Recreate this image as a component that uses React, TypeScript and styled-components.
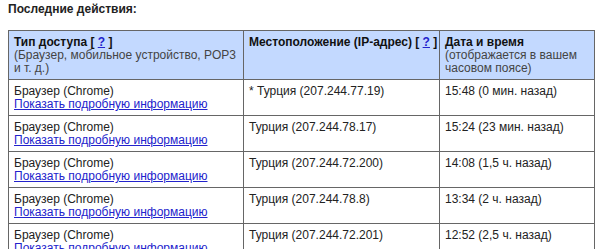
import styled, { createGlobalStyle } from "styled-components";

const GlobalStyle = createGlobalStyle`
  body {
    margin: 0;
    background: #fff;
    font-family: "Liberation Sans", Arial, sans-serif;
    font-size: 12px;
    color: #222;
  }
`;

const Page = styled.div`
  padding: 2px 6px 0 8px;
`;

const Title = styled.div`
  font-weight: bold;
  font-size: 12px;
  line-height: 14px;
  color: #222;
  margin-bottom: 14px;
`;

const Table = styled.table`
  border-collapse: collapse;
  width: 586px;
  border: 1px solid #666;
  table-layout: fixed;
`;

const Th = styled.th`
  background: #c3d9ff;
  border: 1px solid #666;
  text-align: left;
  vertical-align: top;
  font-weight: normal;
  padding: 5px 3px 4px 5px;
  line-height: 13px;
  color: #444;
`;

const HeadLabel = styled.span`
  font-weight: bold;
  color: #111;
  white-space: nowrap;
`;

const Help = styled.a`
  color: #2222cc;
  text-decoration: underline;
`;

const Td = styled.td`
  border: 1px solid #666;
  vertical-align: top;
  padding: 5px 4px 4px 5px;
  line-height: 13px;
  height: 26px;
  color: #222;
`;

const DetailLink = styled.a`
  color: #2222cc;
  text-decoration: underline;
  cursor: pointer;
`;

const rows = [
  { place: "* Турция (207.244.77.19)", time: "15:48 (0 мин. назад)" },
  { place: "Турция (207.244.78.17)", time: "15:24 (23 мин. назад)" },
  { place: "Турция (207.244.72.200)", time: "14:08 (1,5 ч. назад)" },
  { place: "Турция (207.244.78.8)", time: "13:34 (2 ч. назад)" },
  { place: "Турция (207.244.72.201)", time: "12:52 (2,5 ч. назад)" },
];

export default function App() {
  return (
    <>
      <GlobalStyle />
      <Page>
        <Title>Последние действия:</Title>
        <Table>
          <colgroup>
            <col style={{ width: 235 }} />
            <col style={{ width: 196 }} />
            <col style={{ width: 155 }} />
          </colgroup>
          <thead>
            <tr>
              <Th>
                <HeadLabel>
                  Тип доступа [ <Help href="#">?</Help> ]
                </HeadLabel>
                <br />
                (Браузер, мобильное устройство, POP3 и т. д.)
              </Th>
              <Th>
                <HeadLabel>
                  Местоположение (IP-адрес) [ <Help href="#">?</Help> ]
                </HeadLabel>
              </Th>
              <Th>
                <HeadLabel>Дата и время</HeadLabel>
                <br />
                (отображается в вашем часовом поясе)
              </Th>
            </tr>
          </thead>
          <tbody>
            {rows.map((r, i) => (
              <tr key={i}>
                <Td>
                  Браузер (Chrome)
                  <br />
                  <DetailLink>Показать подробную информацию</DetailLink>
                </Td>
                <Td>{r.place}</Td>
                <Td>{r.time}</Td>
              </tr>
            ))}
          </tbody>
        </Table>
      </Page>
    </>
  );
}
